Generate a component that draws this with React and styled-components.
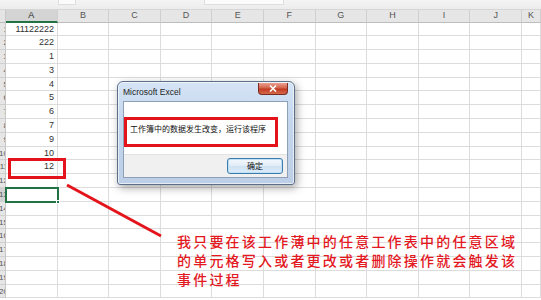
import React from "react";
import styled, { createGlobalStyle } from "styled-components";

const Global = createGlobalStyle`
  html, body { margin: 0; padding: 0; background: #fff; overflow: hidden; }
  * { box-sizing: border-box; }
`;

const COL_W = 51.6;
const ROW_H = 13.8;
const COLS = ["A", "B", "C", "D", "E", "F", "G", "H", "I", "J", "K"];
const DATA = ["11122222", "222", "1", "3", "4", "5", "6", "7", "9", "10", "12"];
const ROWS = 20;

const Page = styled.div`
  position: relative;
  width: 541px;
  height: 300px;
  overflow: hidden;
  background: #fff;
  font-family: "Liberation Sans", Arial, sans-serif;
`;

const TopBand = styled.div`
  height: 10px;
  background: linear-gradient(#f4f4f4, #ececec);
  border-bottom: 1px solid #d6d6d6;
  display: flex;
`;

const FormulaBox = styled.div`
  margin-left: ${(p) => p.$ml}px;
  width: ${(p) => p.$w}px;
  height: 5px;
  background: #fbfbfb;
  border: 1px solid #dedede;
  border-top: none;
`;

const Sheet = styled.div`
  display: grid;
  grid-template-columns: 6px repeat(10, ${COL_W}px) 1fr;
  grid-template-rows: 12.5px repeat(${ROWS}, ${ROW_H}px);
`;

const Corner = styled.div`
  background: #e4e4e4;
  border-right: 1px solid #c8c8c8;
  border-bottom: 1px solid #bdbdbd;
`;

const ColHead = styled.div`
  background: ${(p) => (p.$active ? "#d4d4d4" : "#e6e6e6")};
  border-right: 1px solid #cfcfcf;
  border-bottom: ${(p) => (p.$active ? "2px solid #217346" : "1px solid #bdbdbd")};
  color: ${(p) => (p.$active ? "#2a2a2a" : "#555")};
  font-size: 9px;
  line-height: 11px;
  text-align: center;
`;

const RowHead = styled.div`
  background: ${(p) => (p.$active ? "#d2d2d2" : "#e6e6e6")};
  border-right: 1px solid #c6c6c6;
  border-bottom: 1px solid #d0d0d0;
  font-size: 8px;
  line-height: 13px;
  color: #555;
  overflow: hidden;
  display: flex;
  justify-content: flex-end;
  white-space: nowrap;
`;

const RowNum = styled.span`
  margin-right: -3px;
`;

const Cell = styled.div`
  position: relative;
  border-right: 1px solid #dcdcdc;
  border-bottom: 1px solid #dcdcdc;
  font-size: 9px;
  line-height: 13px;
  color: #333;
  text-align: right;
  padding-right: 2.5px;
  white-space: nowrap;
  ${(p) =>
    p.$selected &&
    `
    outline: 2px solid #217346;
    outline-offset: -1px;
    z-index: 1;
  `}
`;

const Handle = styled.span`
  position: absolute;
  right: -3px;
  bottom: -3px;
  width: 4px;
  height: 4px;
  background: #217346;
  border: 1px solid #fff;
`;

const RedBox = styled.div`
  position: absolute;
  left: ${(p) => p.$x}px;
  top: ${(p) => p.$y}px;
  width: ${(p) => p.$w}px;
  height: ${(p) => p.$h}px;
  border: 3px solid #e3121b;
  z-index: 5;
`;

const Arrow = styled.svg`
  position: absolute;
  left: 0;
  top: 0;
  z-index: 4;
  pointer-events: none;
`;

const Note = styled.div`
  position: absolute;
  left: 177px;
  top: 232px;
  color: #e3191f;
  font-family: "Noto Sans CJK SC", "Noto Sans CJK TC", sans-serif;
  font-weight: 500;
  font-size: 14px;
  letter-spacing: 2.2px;
  line-height: 19px;
  white-space: nowrap;
  z-index: 4;
`;

/* ---- Dialog ---- */
const Dialog = styled.div`
  position: absolute;
  left: 117px;
  top: 81px;
  width: 178px;
  height: 104px;
  border: 1px solid #5d6f88;
  border-radius: 6px 6px 3px 3px;
  background: linear-gradient(180deg, #d5e4f5 0%, #c3d6ee 40%, #bccfe7 100%);
  box-shadow: 2px 3px 8px rgba(0, 0, 0, 0.35), inset 0 0 0 1px rgba(255, 255, 255, 0.6);
  display: flex;
  flex-direction: column;
  z-index: 3;
`;

const TitleBar = styled.div`
  height: 19px;
  display: flex;
  align-items: flex-start;
  justify-content: space-between;
  padding-left: 5px;
  padding-right: 6px;
`;

const Title = styled.span`
  font-family: "Liberation Sans", Arial, sans-serif;
  font-size: 8.5px;
  color: #1e1e1e;
  margin-top: 5px;
`;

const CloseBtn = styled.div`
  width: 30px;
  height: 12px;
  margin-top: 1px;
  border: 1px solid #7a2b20;
  border-top: none;
  border-radius: 0 0 4px 4px;
  background: linear-gradient(180deg, #eaa08f 0%, #d4634c 45%, #c23a22 55%, #d46a4a 100%);
  display: flex;
  align-items: center;
  justify-content: center;
`;

const Body = styled.div`
  flex: 1;
  margin: 0 6px 6px 5px;
  border: 1px solid #8da0b8;
  background: #fff;
  display: flex;
  flex-direction: column;
`;

const Message = styled.div`
  height: 52px;
  padding: 22px 0 0 6px;
  font-family: "Noto Sans CJK SC", sans-serif;
  font-size: 8px;
  line-height: 10px;
  color: #111;
  white-space: nowrap;
`;

const ButtonArea = styled.div`
  flex: 1;
  background: #f0f0f0;
  border-top: 1px solid #e2e2e2;
  display: flex;
  justify-content: flex-end;
  align-items: center;
  padding-right: 4px;
`;

const OkButton = styled.div`
  width: 56px;
  height: 16px;
  border: 1px solid #3d7bad;
  border-radius: 3px;
  background: linear-gradient(180deg, #f4f9fd 0%, #e1ecf7 50%, #cfe2f3 51%, #dcebf8 100%);
  box-shadow: inset 0 0 0 1px #bfe1f7;
  font-family: "Noto Sans CJK SC", sans-serif;
  font-size: 8px;
  line-height: 14px;
  text-align: center;
  color: #111;
`;

export default function App() {
  const cells = [];
  COLS.forEach((c, i) =>
    cells.push(
      <ColHead key={"h" + c} $active={i === 0}>
        {c}
      </ColHead>
    )
  );
  for (let r = 0; r < ROWS; r++) {
    cells.push(
      <RowHead key={"r" + r} $active={r === 12}>
        <RowNum>{r + 1}</RowNum>
      </RowHead>
    );
    COLS.forEach((c, i) => {
      const sel = r === 12 && i === 0;
      cells.push(
        <Cell key={c + r} $selected={sel}>
          {i === 0 && DATA[r] ? DATA[r] : null}
          {sel && <Handle />}
        </Cell>
      );
    });
  }

  return (
    <Page>
      <Global />
      <TopBand>
        <FormulaBox $ml={58} $w={18} />
        <FormulaBox $ml={128} $w={80} />
      </TopBand>
      <Sheet>
        <Corner />
        {cells}
      </Sheet>

      <RedBox $x={8} $y={158} $w={58} $h={21} />

      <Arrow width="541" height="300" viewBox="0 0 541 300">
        <line x1="67" y1="185" x2="161" y2="236" stroke="#e3141b" strokeWidth="3" />
      </Arrow>

      <Note>
        我只要在该工作薄中的任意工作表中的任意区域
        <br />
        的单元格写入或者更改或者删除操作就会触发该
        <br />
        事件过程
      </Note>

      <Dialog>
        <TitleBar>
          <Title>Microsoft Excel</Title>
          <CloseBtn>
            <svg width="8" height="7" viewBox="0 0 8 7">
              <path d="M1 0.5 L7 6.5 M7 0.5 L1 6.5" stroke="#fff" strokeWidth="1.6" />
            </svg>
          </CloseBtn>
        </TitleBar>
        <Body>
          <Message>工作簿中的数据发生改变，运行该程序</Message>
          <ButtonArea>
            <OkButton>确定</OkButton>
          </ButtonArea>
        </Body>
      </Dialog>
      <RedBox $x={124} $y={117} $w={154} $h={30} />
    </Page>
  );
}
